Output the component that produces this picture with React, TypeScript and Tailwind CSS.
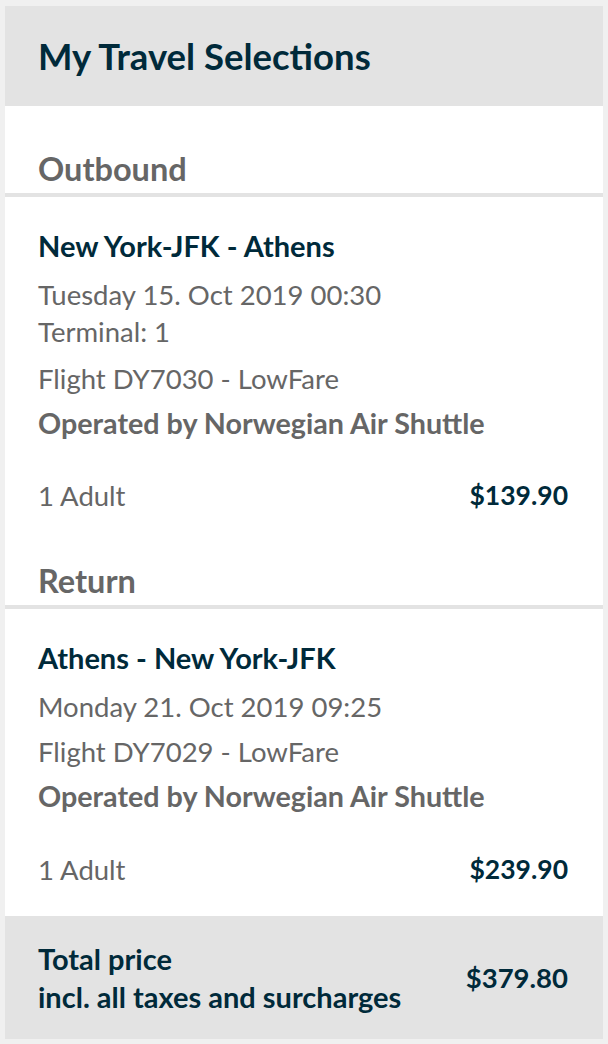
import type { ReactNode } from 'react'

const font = { fontFamily: 'Lato, "Open Sans", sans-serif' }

interface Leg {
  label: string
  route: string
  date: string
  terminal?: string
  flight: string
  operator: string
  pax: string
  price: string
}

const legs: Leg[] = [
  {
    label: 'Outbound',
    route: 'New York-JFK - Athens',
    date: 'Tuesday 15. Oct 2019 00:30',
    terminal: 'Terminal: 1',
    flight: 'Flight DY7030 - LowFare',
    operator: 'Operated by Norwegian Air Shuttle',
    pax: '1 Adult',
    price: '$139.90',
  },
  {
    label: 'Return',
    route: 'Athens - New York-JFK',
    date: 'Monday 21. Oct 2019 09:25',
    flight: 'Flight DY7029 - LowFare',
    operator: 'Operated by Norwegian Air Shuttle',
    pax: '1 Adult',
    price: '$239.90',
  },
]

function Line({ children, bold }: { children: ReactNode; bold?: boolean }) {
  return (
    <p
      className={`leading-[37px] text-[#666666] ${bold ? 'text-[28.7px] font-bold' : 'text-[27.5px] font-normal'}`}
    >
      {children}
    </p>
  )
}

function LegBlock({ leg, first }: { leg: Leg; first: boolean }) {
  return (
    <section>
      <h3
        className={`px-[33px] pb-[8px] text-[32.5px] font-bold leading-[32px] text-[#666666] ${first ? 'pt-[47px]' : 'pt-[51px]'}`}
      >
        {leg.label}
      </h3>
      <div className="h-[4px] bg-[#e3e3e3]" />
      <div className="pl-[33px] pr-[35px] pt-[34px]">
        <h4 className="text-[29px] font-bold leading-[30px] text-[#002a3a]">{leg.route}</h4>
        <div className="mt-[15px]">
          <Line>{leg.date}</Line>
          {leg.terminal && <Line>{leg.terminal}</Line>}
        </div>
        <div className={leg.terminal ? 'mt-[10px]' : 'mt-[8px]'}>
          <Line>{leg.flight}</Line>
        </div>
        <div className="mt-[8px]">
          <Line bold>{leg.operator}</Line>
        </div>
        <div className={`flex items-center justify-between ${first ? 'mt-[35px]' : 'mt-[36px]'}`}>
          <Line>{leg.pax}</Line>
          <span className="text-[26.5px] font-bold leading-[37px] text-[#002a3a]">{leg.price}</span>
        </div>
      </div>
    </section>
  )
}

export default function App() {
  return (
    <div className="min-h-screen bg-[#f0f0f0] px-[5px] pt-[6px] pb-[5px]" style={font}>
      <div className="bg-white">
        <header className="flex h-[100px] items-center bg-[#e3e3e3] px-[33px]">
          <h2 className="text-[36.5px] font-bold text-[#002a3a]">My Travel Selections</h2>
        </header>
        {legs.map((leg, i) => (
          <LegBlock key={leg.label} leg={leg} first={i === 0} />
        ))}
        <footer className="mt-[28px] flex h-[123px] items-center justify-between bg-[#e3e3e3] pl-[33px] pr-[35px] text-[#002a3a]">
          <div className="text-[29px] font-bold leading-[38px]">
            <p>Total price</p>
            <p>incl. all taxes and surcharges</p>
          </div>
          <span className="text-[27.5px] font-bold">$379.80</span>
        </footer>
      </div>
    </div>
  )
}
